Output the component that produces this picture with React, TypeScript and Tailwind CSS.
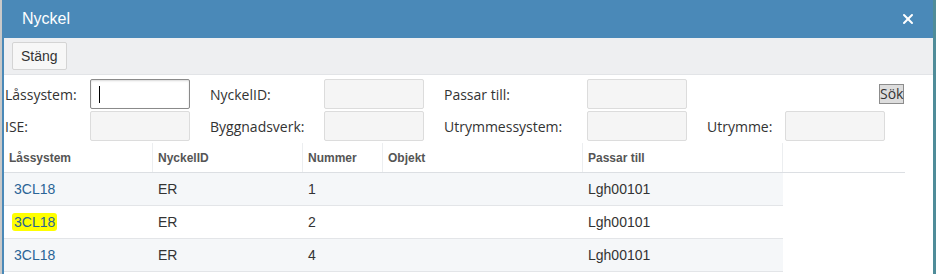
import { X } from 'lucide-react';

const rows = [
    { sys: '3CL18', id: 'ER', nr: '1', obj: '', fits: 'Lgh00101', mark: false },
    { sys: '3CL18', id: 'ER', nr: '2', obj: '', fits: 'Lgh00101', mark: true },
    { sys: '3CL18', id: 'ER', nr: '4', obj: '', fits: 'Lgh00101', mark: false },
];

function Field({ focused }: { focused?: boolean }) {
    return (
        <div
            className={`h-[30px] w-[100px] rounded-[2px] border ${focused ? 'border-[#8a8a8a] bg-white shadow-[inset_0_1px_2px_rgba(0,0,0,0.15)]' : 'border-[#dcdcdc] bg-[#f5f5f5]'} flex items-center pl-2`}
        >
            {focused && <span className="h-[17px] w-px bg-black" />}
        </div>
    );
}

export default function App() {
    const sans = { fontFamily: '"Liberation Sans", Arial, sans-serif' };
    const form = { fontFamily: '"Open Sans", "Noto Sans", sans-serif' };
    return (
        <div className="flex h-[274px] w-[936px] overflow-hidden bg-[#c9c9c9]" style={sans}>
            <div className="ml-[2px] flex w-[931px] flex-col border-l-2 border-[#4a89b8] bg-white">
                {/* Titel */}
                <div className="flex h-[38px] shrink-0 items-center justify-between bg-[#4a89b8] pl-[18px] pr-[17px]">
                    <span className="text-[16px] text-white">Nyckel</span>
                    <X className="h-[16px] w-[16px] text-white" strokeWidth={3} />
                </div>

                {/* Verktygsrad */}
                <div className="flex h-[37px] shrink-0 items-center border-b border-[#e2e4e7] bg-[#eeeff1] pl-[8px]">
                    <button className="h-[28px] rounded-[2px] border border-[#d4d4d4] bg-[#f7f7f7] px-[8px] text-[14px] text-[#333]">
                        Stäng
                    </button>
                </div>

                {/* Sökformulär */}
                <div className="flex shrink-0 items-start pt-[4px] text-[14px] text-[#333]" style={form}>
                    <div className="grid grid-cols-[85px_100px_20px_114px_100px_20px_143px_100px_20px_78px_100px] gap-y-[2px] pl-[1px]">
                        <div className="flex items-center">Låssystem:</div>
                        <Field focused />
                        <div />
                        <div className="flex items-center">NyckelID:</div>
                        <Field />
                        <div />
                        <div className="flex items-center">Passar till:</div>
                        <Field />
                        <div />
                        <div />
                        <div />

                        <div className="flex items-center">ISE:</div>
                        <Field />
                        <div />
                        <div className="flex items-center">Byggnadsverk:</div>
                        <Field />
                        <div />
                        <div className="flex items-center">Utrymmessystem:</div>
                        <Field />
                        <div />
                        <div className="flex items-center">Utrymme:</div>
                        <Field />
                    </div>
                    <button className="ml-[-6px] mt-[5px] h-[20px] border border-[#8c8c8c] bg-[#dddddd] px-0 text-[14px] leading-[18px] text-[#333]">
                        Sök
                    </button>
                </div>

                {/* Tabell */}
                <div className="mt-[2px] w-[901px]">
                    <div className="flex h-[30px] items-center border-b border-[#dcdfe3] text-[12px] font-bold text-[#555]">
                        <div className="flex h-full w-[149px] items-center border-r border-[#eceef0] pl-[5px]">Låssystem</div>
                        <div className="flex h-full w-[150px] items-center border-r border-[#eceef0] pl-[5px]">NyckelID</div>
                        <div className="flex h-full w-[80px] items-center border-r border-[#eceef0] pl-[5px]">Nummer</div>
                        <div className="flex h-full w-[200px] items-center border-r border-[#eceef0] pl-[5px]">Objekt</div>
                        <div className="flex h-full w-[200px] items-center border-r border-[#eceef0] pl-[5px]">Passar till</div>
                        <div className="flex-1" />
                    </div>
                    {rows.map((r, i) => (
                        <div
                            key={i}
                            className={`flex h-[33px] w-[779px] items-center border-b border-[#e3e5e8] text-[14px] text-[#333] ${i % 2 === 0 ? 'bg-[#f5f7f9]' : 'bg-white'}`}
                        >
                            <div className="w-[149px] pl-[10px] text-[#2a6496]">
                                <span className={r.mark ? 'rounded-[3px] bg-[#ffff00] px-[2px] py-[1px] -ml-[2px]' : ''}>{r.sys}</span>
                            </div>
                            <div className="w-[150px] pl-[5px]">{r.id}</div>
                            <div className="w-[80px] pl-[5px]">{r.nr}</div>
                            <div className="w-[200px] pl-[5px]">{r.obj}</div>
                            <div className="w-[200px] pl-[5px]">{r.fits}</div>
                        </div>
                    ))}
                </div>
            </div>
            <div className="w-[3px] bg-[#4f8c99]" />
        </div>
    );
}
